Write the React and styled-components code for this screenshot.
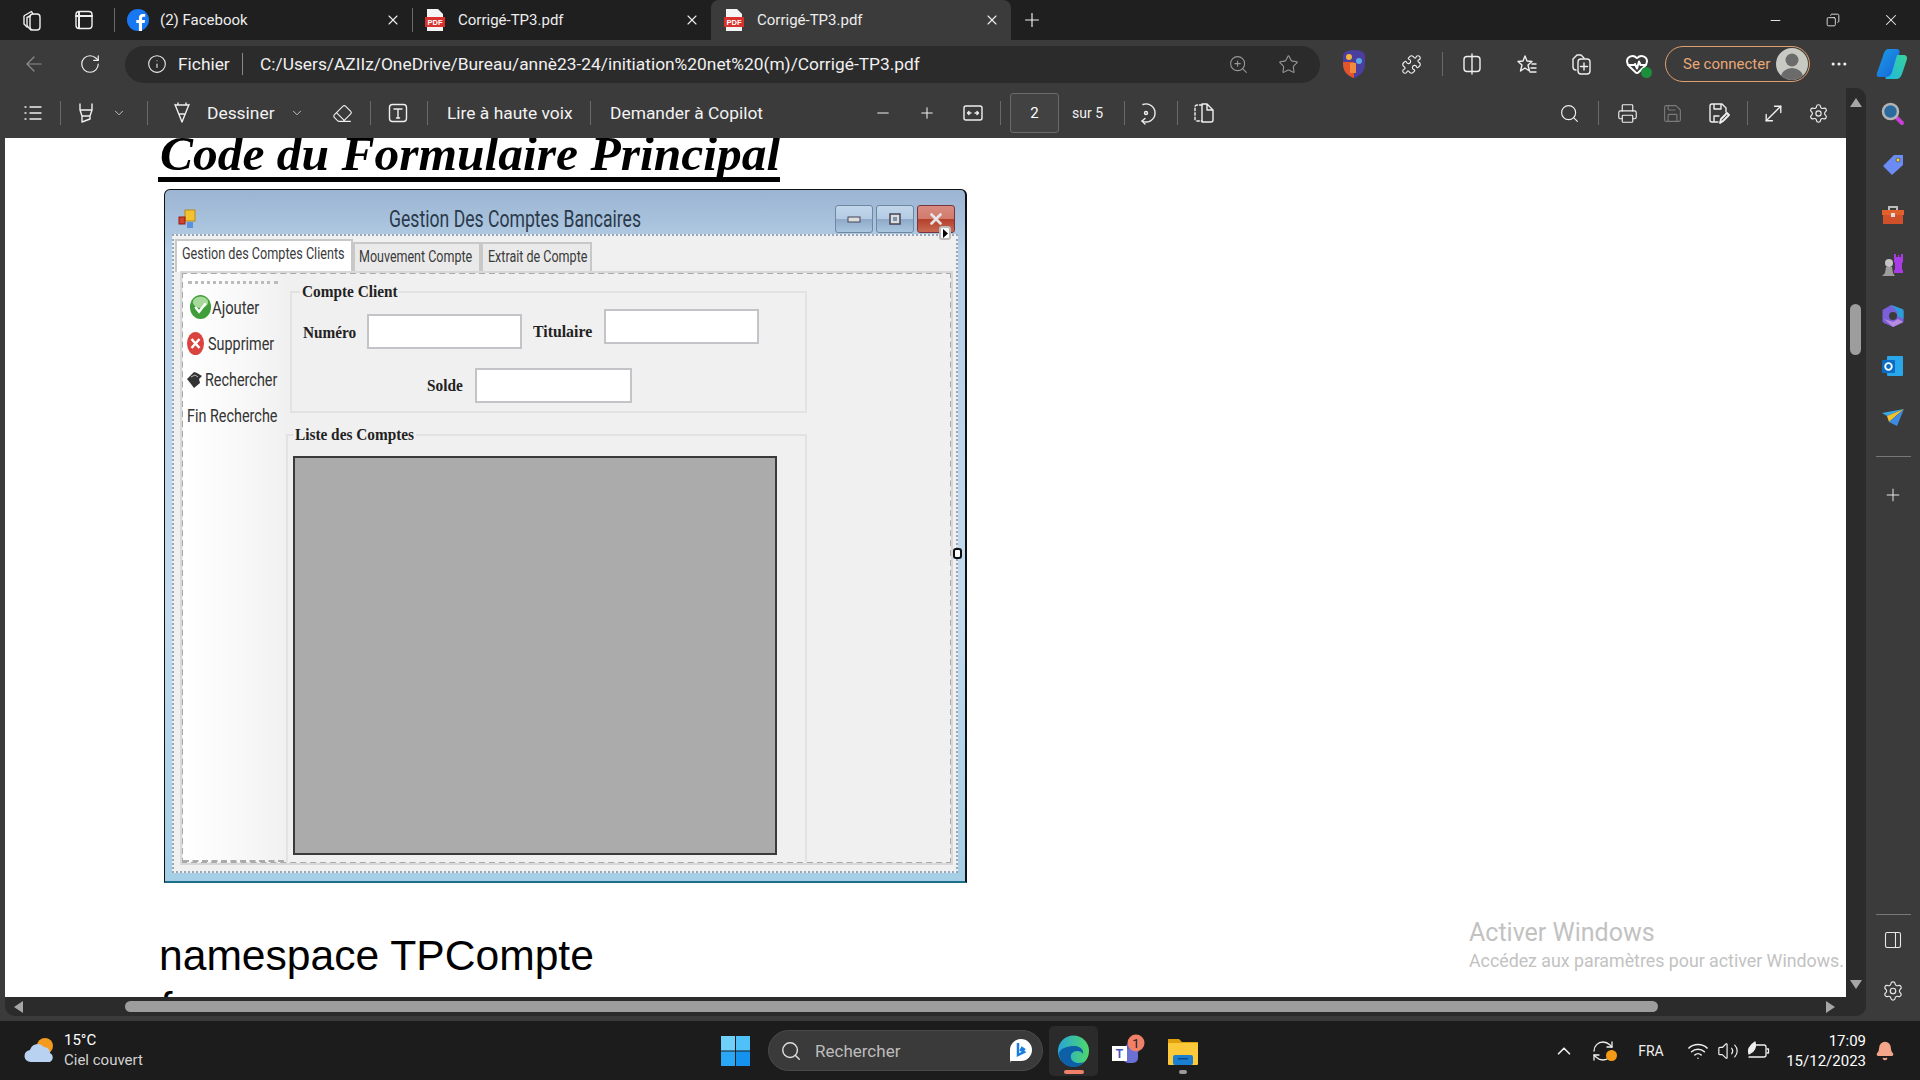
import React from 'react';
import styled, { createGlobalStyle } from 'styled-components';
import {
  ArrowLeft, RotateCw, Info, ZoomIn, Star, Puzzle, Plus, Minus, X, Copy,
  MoreHorizontal, Search, Printer, Save, Settings, ChevronDown, ChevronUp, Eraser,
  Wifi, Volume2, Bell, RefreshCw, PanelRight, MoveDiagonal, HeartPulse,
} from 'lucide-react';

const UI = '"Roboto", "Noto Sans", sans-serif';
const SERIF = '"Liberation Serif", serif';

const GlobalStyle = createGlobalStyle`
  html, body { margin: 0; padding: 0; background: #1c1c1c; }
  * { box-sizing: border-box; }
`;

const Screen = styled.div`
  width: 1920px;
  height: 1080px;
  display: flex;
  flex-direction: column;
  overflow: hidden;
  font-family: ${UI};
  color: #fff;
  background: #3b3b3b;
`;

/* the form in the picture is a stretched capture, so its text runs narrower than any installed face */
const Squeeze = styled.span`
  display: inline-block;
  flex: none;
  width: ${(p) => p.$w}px;
  white-space: nowrap;
  transform: scaleX(${(p) => p.$x});
  transform-origin: left center;
`;

/* tab strip */
const TabStrip = styled.div`
  height: 40px;
  flex: none;
  display: flex;
  align-items: center;
  background: #1f1f1f;
  padding-left: 14px;
`;
const Slot = styled.div`
  width: ${(p) => p.$w}px;
  height: ${(p) => p.$h || 40}px;
  flex: none;
  display: flex;
  align-items: center;
  justify-content: center;
  color: ${(p) => p.$color || '#efefef'};
  font-size: 14px;
  margin-left: ${(p) => p.$ml || 0}px;
`;
const Sep = styled.span`
  display: block;
  width: 1px;
  height: ${(p) => p.$h || 24}px;
  background: ${(p) => p.$color || '#6a6a6a'};
`;
const Tab = styled.div`
  width: ${(p) => p.$w}px;
  height: 40px;
  flex: none;
  display: flex;
  align-items: center;
  gap: ${(p) => p.$gap}px;
  padding: 0 11px 0 ${(p) => p.$pad}px;
  font-size: 15px;
  color: #ededed;
  background: ${(p) => (p.$active ? '#3b3b3b' : 'transparent')};
  border-radius: ${(p) => (p.$active ? '8px 8px 0 0' : '0')};
  span { flex: 1; }
`;
const Grow = styled.div`
  flex: 1;
`;

/* address bar */
const AddressBar = styled.div`
  height: 48px;
  flex: none;
  display: flex;
  align-items: center;
  padding-left: 14px;
`;
const UrlPill = styled.div`
  width: 1195px;
  height: 37px;
  flex: none;
  margin-left: 15px;
  border-radius: 19px;
  background: #2b2b2b;
  display: flex;
  align-items: center;
  padding-left: 22px;
  font-size: 17.35px;
  color: #f0f0f0;
`;
const Fichier = styled.span`
  margin-left: 11px;
  width: 64px;
`;
const UrlText = styled.span`
  margin-left: 17px;
  width: 968px;
  white-space: nowrap;
`;
const SignIn = styled.div`
  width: 145px;
  height: 36px;
  flex: none;
  margin-left: 13px;
  border: 1.5px solid #e0a070;
  border-radius: 18px;
  display: flex;
  align-items: center;
  justify-content: space-between;
  padding: 0 1px 0 17px;
  font-size: 15px;
  color: #e8a878;
`;

/* workspace */
const Workspace = styled.div`
  flex: 1;
  min-height: 0;
  display: flex;
  padding-bottom: 5px;
`;
const Reader = styled.div`
  flex: 1;
  min-width: 0;
  display: flex;
  flex-direction: column;
`;
const ReaderTop = styled.div`
  flex: 1;
  min-height: 0;
  display: flex;
`;
const ReaderMain = styled.div`
  flex: 1;
  min-width: 0;
  display: flex;
  flex-direction: column;
`;
const PdfToolbar = styled.div`
  height: 50px;
  flex: none;
  display: flex;
  align-items: center;
  padding-left: 13px;
  background: #3b3b3b;
`;
const ToolText = styled.div`
  flex: none;
  width: ${(p) => p.$w}px;
  margin-left: ${(p) => p.$ml || 0}px;
  font-size: ${(p) => p.$size || 17.4}px;
  color: #f2f2f2;
  white-space: nowrap;
`;
const PageBox = styled.div`
  width: 49px;
  height: 40px;
  flex: none;
  border: 1px solid #6a6a6a;
  border-radius: 3px;
  background: #424242;
  display: flex;
  align-items: center;
  justify-content: center;
  font-size: 15px;
`;
const DocClip = styled.div`
  flex: 1;
  min-height: 0;
  margin-left: 5px;
  padding-left: 155px;
  background: #fff;
  overflow: hidden;
  position: relative;
  color: #000;
`;
const Heading = styled.h1`
  display: inline-block;
  margin: -7px 0 0 -2px;
  padding-left: 2px;
  font: italic bold 49.5px/46px ${SERIF};
  border-bottom: 5px solid #000;
  white-space: nowrap;
`;
const CodeLine = styled.div`
  font: 42.6px/52px "Liberation Sans", sans-serif;
  white-space: nowrap;
  margin: ${(p) => p.$mt || 0}px 0 0 -1px;
`;
const Watermark = styled.div`
  position: absolute;
  left: 1464px;
  top: 777px;
  color: #c2c2c2;
  font-size: 17.8px;
  white-space: nowrap;
  p { margin: 0; font-size: 25px; line-height: 35px; }
`;

/* scrollbars */
const VScroll = styled.div`
  width: 20px;
  flex: none;
  background: #2b2b2b;
  border-radius: 0 10px 0 0;
  position: relative;
  display: flex;
  flex-direction: column;
  align-items: center;
  justify-content: space-between;
  padding: 10px 0 8px;
`;
const VThumb = styled.div`
  position: absolute;
  top: 216px;
  left: 4px;
  width: 11px;
  height: 51px;
  border-radius: 6px;
  background: #9d9d9d;
`;
const ArrowV = styled.div`
  width: 0;
  height: 0;
  border-left: 6px solid transparent;
  border-right: 6px solid transparent;
  border-${(p) => (p.$down ? 'top' : 'bottom')}: 9px solid #a6a6a6;
`;
const HScroll = styled.div`
  height: 19px;
  flex: none;
  margin-left: 5px;
  background: #2b2b2b;
  border-radius: 0 0 10px 10px;
  display: flex;
  align-items: center;
  padding-left: 9px;
`;
const HThumb = styled.div`
  width: 1533px;
  height: 11px;
  margin-left: 102px;
  border-radius: 6px;
  background: #9d9d9d;
`;
const ArrowH = styled.div`
  width: 0;
  height: 0;
  border-top: 6px solid transparent;
  border-bottom: 6px solid transparent;
  border-${(p) => (p.$right ? 'left' : 'right')}: 9px solid #a6a6a6;
  margin-left: ${(p) => p.$ml || 0}px;
`;

/* side panel */
const SidePanel = styled.div`
  width: 54px;
  flex: none;
  display: flex;
  flex-direction: column;
  align-items: center;
  padding-top: 1px;
`;
const SideSlot = styled.div`
  height: 50.4px;
  width: 54px;
  flex: none;
  display: flex;
  align-items: center;
  justify-content: center;
  color: #e8e8e8;
`;
const SideRule = styled.div`
  width: 35px;
  height: 1px;
  background: #777;
  margin: ${(p) => p.$m};
`;

/* taskbar */
const Taskbar = styled.div`
  height: 59px;
  flex: none;
  display: flex;
  align-items: center;
  background: #1c1c1c;
`;
const Weather = styled.div`
  width: 721px;
  flex: none;
  display: flex;
  align-items: center;
  gap: 9px;
  padding-left: 24px;
  font-size: 15px;
  line-height: 20px;
  margin-top: -1px;
  div:last-child { color: #d2d2d2; }
  b { display: block; font-weight: 400; color: #fff; }
`;
const TaskSearch = styled.div`
  width: 275px;
  height: 41px;
  flex: none;
  margin-left: 18px;
  border-radius: 21px;
  border: 1px solid #4a4a4a;
  background: #3a3a3a;
  display: flex;
  align-items: center;
  padding: 0 9px 0 11px;
  gap: 13px;
  color: #bdbdbd;
  font-size: 17px;
  span { flex: 1; }
`;
const TaskApp = styled.div`
  width: ${(p) => p.$w}px;
  height: 50px;
  flex: none;
  margin-left: ${(p) => p.$ml}px;
  display: flex;
  align-items: center;
  justify-content: center;
  position: relative;
  border-radius: 5px;
  background: ${(p) => (p.$on ? '#2b2b2b' : 'transparent')};
`;
const RunMark = styled.span`
  position: absolute;
  bottom: 2px;
  left: 50%;
  transform: translateX(-50%);
  width: ${(p) => p.$w}px;
  height: 4px;
  border-radius: 2px;
  background: ${(p) => p.$color};
`;
const Clock = styled.div`
  width: 90px;
  flex: none;
  text-align: right;
  font-size: 15px;
  line-height: 20px;
  margin-left: 5px;
`;

/* the captured WinForms window */
const WinFrame = styled.div`
  width: 803px;
  height: 694px;
  margin: 7px 0 0 4px;
  position: relative;
  display: flex;
  flex-direction: column;
  border: 1px solid #111;
  border-right-width: 2px;
  border-bottom: 2px solid #1e6f86;
  border-radius: 6px 6px 0 0;
  background: linear-gradient(#9ab4d2, #b6d0e8 9%, #c5dcef 60%, #a5cfe6);
  padding: 0 7px 8px 7px;
  font-family: ${UI};
  color: #222;
`;
const WinTitle = styled.div`
  height: 44px;
  flex: none;
  display: flex;
  align-items: center;
  padding: 14px 3px 0 6px;
`;
const WinCaption = styled(Squeeze)`
  margin-left: 193px;
  font-size: 23px;
  color: #2b3a4a;
`;
const WinBtn = styled.div`
  width: 38px;
  height: 28px;
  margin-left: 3px;
  flex: none;
  display: flex;
  align-items: center;
  justify-content: center;
  border: 1px solid ${(p) => (p.$close ? '#7a3440' : '#6f87a3')};
  border-radius: 3px;
  background: ${(p) => (p.$close
    ? 'linear-gradient(#d98b80, #d07a6c 50%, #b4402c 52%, #c96a52)'
    : 'linear-gradient(#c2d6ea, #b3cbe3 50%, #8faac8 52%, #a9c6df)')};
`;
const WinBody = styled.div`
  flex: 1;
  min-height: 0;
  display: flex;
  flex-direction: column;
  background: #f0f0f0;
  border: 2px dotted #97a6b8;
  padding: 1px 4px 7px 1px;
`;
const TabRow = styled.div`
  height: 35px;
  flex: none;
  display: flex;
  align-items: flex-end;
`;
const FormTab = styled.div`
  width: ${(p) => p.$w}px;
  height: ${(p) => (p.$active ? 33 : 30)}px;
  flex: none;
  display: flex;
  align-items: center;
  padding: 0 0 ${(p) => (p.$active ? 8 : 4)}px ${(p) => p.$pl}px;
  font-size: 17px;
  color: #3a3a3a;
  background: ${(p) => (p.$active ? '#fff' : '#eaeaea')};
  border: 2px solid #c8c8c8;
  border-bottom: 0;
`;
const TabPage = styled.div`
  flex: 1;
  min-height: 0;
  display: flex;
  margin-left: 6px;
  border: 2px dashed #a9a9a9;
  outline: 2px solid #d8d8d8;
  outline-offset: -1px;
`;
const ToolStrip = styled.div`
  width: 101px;
  flex: none;
  display: flex;
  flex-direction: column;
  background: linear-gradient(90deg, #fff, #f8f8f8 60%, #f1f1f1);
  border-bottom: 2px dashed #aaa;
  padding: 7px 0 0 3px;
`;
const Grip = styled.div`
  width: 90px;
  height: 3px;
  margin: 0 0 5px 2px;
  border-top: 3px dotted #bbb;
`;
const StripItem = styled.div`
  height: 36.2px;
  flex: none;
  display: flex;
  align-items: center;
  gap: ${(p) => p.$gap}px;
  padding-left: ${(p) => p.$pad}px;
  font-size: 18px;
  color: #333;
  svg { flex: none; }
`;
const FormContent = styled.div`
  width: 523px;
  flex: none;
  display: flex;
  flex-direction: column;
`;
const GroupBox = styled.fieldset`
  flex: ${(p) => (p.$h ? 'none' : 1)};
  margin: ${(p) => p.$m};
  padding: ${(p) => p.$p};
  min-width: 0;
  border: 2px solid #e2e2e2;
  border-bottom-width: ${(p) => (p.$open ? 0 : 2)}px;
  ${(p) => (p.$h ? `height: ${p.$h}px;` : '')}
  legend {
    padding: 0 2px;
    margin-left: ${(p) => p.$lm}px;
    font: bold 17px/18px ${SERIF};
    color: #222;
  }
`;
const FieldRow = styled.div`
  display: flex;
  align-items: flex-start;
  padding-left: ${(p) => p.$pl}px;
  margin-top: ${(p) => p.$mt || 0}px;
`;
const FieldLabel = styled(Squeeze)`
  margin: ${(p) => p.$m || 0};
  font: bold 17px/20px ${SERIF};
  color: #222;
`;
const TextBox = styled.div`
  height: 35px;
  width: ${(p) => p.$w}px;
  flex: none;
  margin: ${(p) => p.$m || 0};
  background: #fff;
  border: 2px solid #c3c3c8;
`;
const GridView = styled.div`
  width: 484px;
  height: 399px;
  margin-left: 5px;
  background: #ababab;
  border: 2px solid #3a3a3a;
`;
const GripTip = styled.div`
  position: absolute;
  width: ${(p) => p.$w}px;
  height: ${(p) => p.$h}px;
  right: ${(p) => p.$r}px;
  top: ${(p) => p.$t}px;
  background: #fff;
  border: 2px solid ${(p) => p.$color};
  border-radius: 3px;
  display: flex;
  align-items: center;
  justify-content: center;
  z-index: 2;
`;

/* drawings */
const Tool = ({ children, ...rest }) => (
  <svg width="24" height="24" viewBox="0 0 24 24" fill="none" stroke="currentColor" strokeWidth="1.4" strokeLinecap="round" strokeLinejoin="round" {...rest}>{children}</svg>
);
const WorkspacesIcon = () => <Tool><rect x="10" y="6" width="10" height="16" rx="3" /><path d="M10 8 7 9.5V17c0 1 .5 1.5 1.500 2.500L11 22" /><path d="M13 6l-1.500-2.500-7 4A2 2 0 0 0 4 9.500V16l3 3" /></Tool>;
const TabsIcon = () => <Tool><rect x="4" y="3.5" width="16" height="17" rx="3" /><path d="M7 4v16M4 8h16" strokeWidth="2" /></Tool>;
const ListIcon = () => <Tool><path d="M4 6h1M9 6h11M4 12h1M9 12h11M4 18h1M9 18h11" /></Tool>;
const MarkerIcon = () => <Tool><path d="M6 3v6h12V3M6 9l2 6h8l2-6M8 15v6l8-3v-3" /></Tool>;
const PenIcon = () => <Tool><path d="M5 3.5 12 21l7-17.5M5 4h14M8 4V2M16 4V2M9 13h6" /></Tool>;
const TextBoxIcon = () => <Tool><rect x="3.5" y="3.5" width="17" height="17" rx="3" /><path d="M8 8h8M12 8v9M10.5 17h3" /></Tool>;
const FitIcon = () => <Tool><rect x="3" y="5" width="18" height="14" rx="2" /><path d="M7 12h3M14 12h3M8 10.5 6.5 12 8 13.5M16 10.5l1.5 1.5-1.5 1.5" /></Tool>;
const RotateIcon = () => <Tool><path d="M9 3.500A9 9 0 1 1 8 20" /><path d="M11 17.500 8 20l3 3" /><circle cx="12" cy="12" r="1.5" /></Tool>;
const TwoPageIcon = () => <Tool><path d="M10 4H5a2 2 0 0 0-2 2v12a2 2 0 0 0 2 2h5" strokeDasharray="2.5 2" /><path d="M10 3v18h9a2 2 0 0 0 2-2V9l-6-6zM15 3v6h6" /></Tool>;
const SaveAsIcon = () => <Tool><path d="M12 21H6a2 2 0 0 1-2-2V5a2 2 0 0 1 2-2h10l4 4v4M8 3v5h7V3M8 21v-6h5" /><path d="M14 22l1-4 6-6 2 2-6 6z" strokeWidth="1.8" /></Tool>;
const FavIcon = () => <Tool><path d="M10 4l2 5 5 .5-4 3.5 1.5 6L10 16l-4.5 3L7 13 3 9.5 8 9z" /><path d="M17 12h4M16 16h5M15 20h6" /></Tool>;
const CollectIcon = () => <Tool><path d="M6 18a3 3 0 0 1-3-3V7l4-4h4l3 3" /><rect x="8" y="7" width="12" height="15" rx="3" /><path d="M14 11v7M10.5 14.5h7" /></Tool>;
const SplitIcon = () => <Tool><rect x="4" y="4.5" width="16" height="15" rx="3" /><path d="M12 2v20" /></Tool>;

const FacebookLogo = () => (
  <svg width="22" height="22" viewBox="0 0 22 22"><circle cx="11" cy="11" r="11" fill="#1877f2" /><path d="M15 22v-8h2.6l.5-3H15V9.300c0-1 .4-1.600 1.700-1.600h1.500V5.100c-.7-.1-1.500-.2-2.300-.2-2.500 0-4 1.500-4 4V11H9.300v3h2.600v8z" fill="#fff" /></svg>
);
const PdfLogo = () => (
  <svg width="20" height="24" viewBox="0 0 20 24"><path d="M2 1h11l5 5v17H2z" fill="#f5f5f5" /><rect x="0" y="9" width="20" height="10" fill="#d9322e" /><text x="10" y="17" textAnchor="middle" fontFamily="Liberation Sans" fontWeight="700" fontSize="7.5" fill="#fff">PDF</text></svg>
);
const ProfileShield = () => (
  <svg width="26" height="30" viewBox="0 0 26 30"><path d="M2 7c0-3 3-6 11-6s11 3 11 6v8c0 8-5 12-11 14C7 27 2 23 2 15z" fill="#4a3f9e" /><path d="M2 13h11v16C7 27 2 23 2 15z" fill="#e2542a" /><circle cx="8" cy="8" r="3" fill="#f3b33d" /><circle cx="18" cy="12" r="3" fill="#5aa7e8" /><rect x="9" y="14" width="6" height="10" fill="#f08a3c" /></svg>
);
const HealthIcon = () => (
  <div style={{ position: 'relative', width: 24, height: 24 }}>
    <HeartPulse size={24} strokeWidth={2} color="#fff" />
    <svg width="11" height="11" viewBox="0 0 11 11" style={{ position: 'absolute', right: -3, bottom: -2 }}><circle cx="5.5" cy="5.5" r="5.5" fill="#1c8f3c" /></svg>
  </div>
);
const Avatar = () => (
  <svg width="32" height="32" viewBox="0 0 32 32"><defs><clipPath id="av"><circle cx="16" cy="16" r="16" /></clipPath></defs><circle cx="16" cy="16" r="16" fill="#c9c9c4" /><g clipPath="url(#av)"><circle cx="16" cy="12" r="6.5" fill="#6b6b6b" /><ellipse cx="16" cy="29" rx="11" ry="9" fill="#6b6b6b" /></g></svg>
);
const CopilotLogo = () => (
  <svg width="34" height="34" viewBox="0 0 34 34"><defs><linearGradient id="cp1" x1="0" y1="0" x2="1" y2="1"><stop offset="0" stopColor="#1a9fe8" /><stop offset="1" stopColor="#1760d8" /></linearGradient><linearGradient id="cp2" x1="0" y1="1" x2="1" y2="0"><stop offset="0" stopColor="#1fb6e0" /><stop offset="1" stopColor="#38d39a" /></linearGradient></defs><path d="M13 2h9c2 0 3 2 2.500 4L19 25c-1 3-3 5-6 5H4c-2 0-3-2-2-4l6-17c1-4 3-7 5-7z" fill="url(#cp1)" /><path d="M22 8h7c2 0 3.500 2 3 4l-5 15c-1 3-3 5-6 5h-9c-2 0-2-1-1-2 3 0 5-2 6-5z" fill="url(#cp2)" /></svg>
);
const FormIcon = () => (
  <svg width="18" height="20" viewBox="0 0 18 20"><rect x="7" y="1" width="10" height="11" fill="#f2c230" stroke="#b88a1a" /><rect x="1" y="8" width="6" height="7" fill="#d8402e" stroke="#8a1f14" /><rect x="9" y="13" width="6" height="6" fill="#5d8fe0" /></svg>
);
const OkIcon = () => (
  <svg width="23" height="26" viewBox="0 0 24 26"><ellipse cx="12" cy="13" rx="11" ry="12.5" fill="#3f9e3a" /><ellipse cx="12" cy="8" rx="8" ry="6" fill="#a6d99a" /><path d="M6.5 13l4 5 7-9" stroke="#fff" strokeWidth="2.5" fill="none" /></svg>
);
const DeleteIcon = () => (
  <svg width="17" height="23" viewBox="0 0 17 23"><ellipse cx="8.5" cy="11.5" rx="8.5" ry="11.5" fill="#d9453e" /><path d="M4.5 7l8 9M12.5 7l-8 9" stroke="#fff" strokeWidth="2.5" /></svg>
);
const SearchFormIcon = () => (
  <svg width="17" height="19" viewBox="0 0 17 19"><path d="M1 9l7-7 3 1 5 3-3 3 1 4-6 5-3-4z" fill="#333" /><path d="M5 7l4-2 3 2" stroke="#bbb" fill="none" /></svg>
);

const SideLens = () => (
  <svg width="24" height="24" viewBox="0 0 24 24"><path d="M14 14l7 7" stroke="#c93fd8" strokeWidth="4" strokeLinecap="round" /><circle cx="9.5" cy="9.5" r="7.5" fill="#2a6a9e" stroke="#b4b4b4" strokeWidth="2.5" /></svg>
);
const SideTag = () => (
  <svg width="22" height="22" viewBox="0 0 22 22"><path d="M1 12 12 1h9v10L10 21z" fill="#6b8cf5" /><circle cx="16" cy="6" r="2" fill="#f1d03a" stroke="#333" strokeWidth=".6" /></svg>
);
const SideBox = () => (
  <svg width="24" height="20" viewBox="0 0 24 20"><path d="M8 5V2h8v3" stroke="#bdbdbd" strokeWidth="2" fill="none" /><rect x="1" y="5" width="22" height="5" fill="#e2602c" /><rect x="2" y="10" width="20" height="9" fill="#d0502a" /><rect x="10" y="8" width="4" height="4" fill="#ddd" /></svg>
);
const SideChess = () => (
  <svg width="24" height="24" viewBox="0 0 24 24"><path d="M15 1v3h2V2h1v2h2V1h2v8l-1 1v7h1v3H13v-3h1v-7l-1-1V1z" fill="#a93ce6" /><circle cx="8" cy="10" r="4" fill="#c4c4c4" /><path d="M5 14h6l1 6 2 3H1l3-3z" fill="#9c9c9c" /></svg>
);
const SideM365 = () => (
  <svg width="22" height="24" viewBox="0 0 22 24"><path d="M9 1 20 5c1 .5 1.5 1 1.5 2v10c0 1-.5 1.5-1.500 2L11 23 2 19c-1-.5-1.500-1-1.500-2V6z" fill="#7a5fd8" /><path d="M9 1l11 4c1 .5 1.500 1 1.500 2v8l-6-3V8z" fill="#27a0d8" /><path d="M2 15l9 8 10-5-5-3-5 3z" fill="#b98be0" /><circle cx="11" cy="12" r="4" fill="#3b3b3b" /></svg>
);
const SideOutlook = () => (
  <svg width="22" height="22" viewBox="0 0 22 22"><rect x="5" y="1" width="16" height="20" rx="1" fill="#28a8ea" /><rect x="0" y="5" width="13" height="13" rx="1" fill="#0a6cc4" /><circle cx="6.5" cy="11.5" r="3.3" fill="none" stroke="#fff" strokeWidth="1.8" /></svg>
);
const SideSend = () => (
  <svg width="24" height="18" viewBox="0 0 24 18"><path d="M1 5 23 1 6 8z" fill="#38a8e8" /><path d="M6 8 23 1 8 14z" fill="#f2c12e" /><path d="M23 1 16 18l-8-4z" fill="#3d8be0" /></svg>
);

const CloudIcon = () => (
  <svg width="31" height="27" viewBox="0 0 31 27"><circle cx="21" cy="9" r="8" fill="#f39a1f" /><path d="M7 25a6 6 0 0 1-1-12 8 8 0 0 1 14-3 6 6 0 0 1 6 6 5 5 0 0 1 0 9z" fill="#b9d2f2" /></svg>
);
const WinLogo = () => (
  <svg width="29" height="30" viewBox="0 0 29 30"><rect width="14" height="14.5" fill="#6fd0fa" /><rect x="15" width="14" height="14.5" fill="#4fc0f8" /><rect y="15.5" width="14" height="14.5" fill="#2aa8f5" /><rect x="15" y="15.5" width="14" height="14.5" fill="#1492ee" /></svg>
);
const BingLogo = () => (
  <svg width="24" height="26" viewBox="0 0 24 26"><path d="M12 1a11 11 0 0 1 0 22H2v2l-1-3V12A11 11 0 0 1 12 1z" fill="#fff" /><path d="M9 5v12l6-3-3-2 1-2 3 2" stroke="#1a7fdc" strokeWidth="2.5" fill="none" /></svg>
);
const EdgeLogo = () => (
  <svg width="31" height="32" viewBox="0 0 31 32"><defs><linearGradient id="ed" x1="0" y1="0" x2="1" y2="0"><stop offset="0" stopColor="#27a5d8" /><stop offset="1" stopColor="#4fd86a" /></linearGradient></defs><circle cx="15.5" cy="16" r="15.5" fill="url(#ed)" /><path d="M1 18c0 8 7 14 14 14 5 0 9-2 11-5-5 2-12 1-13-4-1-4 2-7 6-7 3 0 5 1 6 3 1-4-3-8-8-8C9 11 3 13 1 18z" fill="#0d5fa8" /></svg>
);
const TeamsLogo = () => (
  <svg width="34" height="34" viewBox="0 0 34 34"><circle cx="21" cy="15" r="7" fill="#5b5fc7" /><rect x="12" y="15" width="15" height="14" rx="5" fill="#6a6fd4" /><rect x="1" y="12" width="15" height="15" fill="#fff" /><text x="8.5" y="24" textAnchor="middle" fontFamily="Liberation Sans" fontWeight="700" fontSize="12" fill="#4b53bc">T</text><circle cx="25" cy="9" r="8.5" fill="#f08068" /><text x="25" y="13.5" textAnchor="middle" fontFamily="Roboto" fontSize="13" fill="#222">1</text></svg>
);
const FolderLogo = () => (
  <svg width="32" height="32" viewBox="0 0 32 32"><path d="M1 4h11l3 3h16v4H1z" fill="#e0a20c" /><rect x="1" y="8" width="30" height="22" rx="1" fill="#fcc93a" /><rect x="6" y="20" width="20" height="10" rx="2" fill="#1a7fd0" /><rect x="11" y="23" width="10" height="1.5" fill="#0a4a8a" /></svg>
);
const SyncDot = () => (
  <div style={{ position: 'relative', width: 24, height: 24 }}>
    <RefreshCw size={24} strokeWidth={1.3} color="#f0f0f0" />
    <svg width="11" height="11" viewBox="0 0 11 11" style={{ position: 'absolute', right: -2, bottom: 2 }}><circle cx="5.5" cy="5.5" r="5.5" fill="#f59a14" /></svg>
  </div>
);
const BatteryIcon = () => (
  <Tool strokeWidth="1.3"><path d="M9 6h9a2 2 0 0 1 2 2v8a2 2 0 0 1-2 2H3" /><path d="M21 10h1.5v4H21" /><path d="M3 15C1 9 6 5 9 3c1 4 1 9-6 12z" fill="currentColor" /></Tool>
);

const icon = { size: 21, strokeWidth: 1.3 };

const PdfTab = ({ w, pad, gap, active, label, logo }) => (
  <Tab $w={w} $pad={pad} $gap={gap} $active={active}>
    {logo}
    <span>{label}</span>
    <X size={16} strokeWidth={1.7} />
  </Tab>
);

const App = () => (
  <Screen>
    <GlobalStyle />
    <TabStrip>
      <Slot $w={36}><WorkspacesIcon /></Slot>
      <Slot $w={36} $ml={16}><TabsIcon /></Slot>
      <Slot $w={24}><Sep /></Slot>
      <PdfTab w={286} pad={1} gap={11} label="(2) Facebook" logo={<FacebookLogo />} />
      <Sep />
      <PdfTab w={298} pad={12} gap={13} label="Corrigé-TP3.pdf" logo={<PdfLogo />} />
      <PdfTab w={300} pad={13} gap={13} active label="Corrigé-TP3.pdf" logo={<PdfLogo />} />
      <Slot $w={42}><Plus size={22} strokeWidth={1.3} /></Slot>
      <Grow />
      <Slot $w={58}><Minus size={15} strokeWidth={1.5} /></Slot>
      <Slot $w={58}><Copy size={14} strokeWidth={1.5} style={{ transform: 'scaleX(-1)' }} /></Slot>
      <Slot $w={58}><X size={18} strokeWidth={1.4} /></Slot>
    </TabStrip>

    <AddressBar>
      <Slot $w={40} $h={48} $color="#8d8d8d"><ArrowLeft size={24} strokeWidth={1.2} /></Slot>
      <Slot $w={40} $h={48} $ml={16}><RotateCw size={22} strokeWidth={1.3} /></Slot>
      <UrlPill>
        <Info size={20} strokeWidth={1.3} />
        <Fichier>Fichier</Fichier>
        <Sep $color="#888" $h={22} />
        <UrlText>C:/Users/AZIIz/OneDrive/Bureau/annè23-24/initiation%20net%20(m)/Corrigé-TP3.pdf</UrlText>
        <ZoomIn size={21} strokeWidth={1.2} color="#999" />
        <Slot $w={21} $h={37} $ml={29} $color="#999"><Star size={21} strokeWidth={1.2} /></Slot>
      </UrlPill>
      <Slot $w={34} $h={48} $ml={17}><ProfileShield /></Slot>
      <Slot $w={30} $h={48} $ml={25}><Puzzle {...icon} /></Slot>
      <Slot $w={1} $h={48} $ml={16}><Sep /></Slot>
      <Slot $w={30} $h={48} $ml={14}><SplitIcon /></Slot>
      <Slot $w={30} $h={48} $ml={25}><FavIcon /></Slot>
      <Slot $w={30} $h={48} $ml={25}><CollectIcon /></Slot>
      <Slot $w={30} $h={48} $ml={25}><HealthIcon /></Slot>
      <SignIn>Se connecter<Avatar /></SignIn>
      <Slot $w={30} $h={48} $ml={14}><MoreHorizontal size={20} strokeWidth={1.8} /></Slot>
      <Slot $w={40} $h={48} $ml={18}><CopilotLogo /></Slot>
    </AddressBar>

    <Workspace>
      <Reader>
        <ReaderTop>
          <ReaderMain>
            <PdfToolbar>
              <Slot $w={40} $h={50}><ListIcon /></Slot>
              <Slot $w={14} $h={50}><Sep /></Slot>
              <Slot $w={38} $h={50}><MarkerIcon /></Slot>
              <Slot $w={28} $h={50}><ChevronDown size={14} strokeWidth={1.3} /></Slot>
              <Slot $w={28} $h={50}><Sep /></Slot>
              <Slot $w={42} $h={50}><PenIcon /></Slot>
              <ToolText $w={76} $ml={4}>Dessiner</ToolText>
              <Slot $w={28} $h={50}><ChevronDown size={14} strokeWidth={1.3} /></Slot>
              <Slot $w={38} $h={50} $ml={12}><Eraser {...icon} /></Slot>
              <Slot $w={18} $h={50}><Sep /></Slot>
              <Slot $w={38} $h={50}><TextBoxIcon /></Slot>
              <Slot $w={20} $h={50}><Sep /></Slot>
              <ToolText $w={126} $ml={10}>Lire à haute voix</ToolText>
              <Slot $w={34} $h={50}><Sep /></Slot>
              <ToolText $w={156} $ml={3}>Demander à Copilot</ToolText>
              <Slot $w={30} $h={50} $ml={102}><Minus size={18} strokeWidth={1.4} /></Slot>
              <Slot $w={30} $h={50} $ml={14}><Plus size={18} strokeWidth={1.4} /></Slot>
              <Slot $w={30} $h={50} $ml={16}><FitIcon /></Slot>
              <Slot $w={1} $h={50} $ml={12}><Sep /></Slot>
              <Slot $w={1} $h={50} $ml={8} />
              <PageBox>2</PageBox>
              <ToolText $w={34} $ml={13} $size={14}>sur 5</ToolText>
              <Slot $w={1} $h={50} $ml={18}><Sep /></Slot>
              <Slot $w={30} $h={50} $ml={6}><RotateIcon /></Slot>
              <Slot $w={1} $h={50} $ml={16}><Sep /></Slot>
              <Slot $w={30} $h={50} $ml={11}><TwoPageIcon /></Slot>
              <Grow />
              <Slot $w={30} $h={50}><Search {...icon} /></Slot>
              <Slot $w={1} $h={50} $ml={14}><Sep /></Slot>
              <Slot $w={30} $h={50} $ml={13}><Printer {...icon} /></Slot>
              <Slot $w={30} $h={50} $ml={15} $color="#7a7a7a"><Save {...icon} /></Slot>
              <Slot $w={30} $h={50} $ml={16}><SaveAsIcon /></Slot>
              <Slot $w={1} $h={50} $ml={14}><Sep /></Slot>
              <Slot $w={30} $h={50} $ml={10}><MoveDiagonal size={25} strokeWidth={1.3} /></Slot>
              <Slot $w={30} $h={50} $ml={15}><Settings {...icon} /></Slot>
              <Slot $w={13} $h={50} />
            </PdfToolbar>
            <DocClip>
              <Heading>Code du Formulaire Principal</Heading>
              <WinFrame>
                <WinTitle>
                  <FormIcon />
                  <WinCaption $w={252} $x={0.766}>Gestion Des Comptes Bancaires</WinCaption>
                  <Grow />
                  <WinBtn><svg width="14" height="8"><rect x="1" y="2" width="12" height="5" fill="#ddd" stroke="#445" /></svg></WinBtn>
                  <WinBtn><svg width="14" height="14"><rect x="2" y="2" width="10" height="10" fill="#ddd" stroke="#445" strokeWidth="1.5" /><rect x="5" y="5" width="4" height="4" fill="#7d93ad" /></svg></WinBtn>
                  <WinBtn $close><X size={18} strokeWidth={3.6} color="#e4e4e4" /></WinBtn>
                </WinTitle>
                <GripTip $w={12} $h={14} $r={14} $t={36} $color="#bbb"><svg width="5" height="9"><path d="M0 0l5 4.500L0 9z" fill="#000" /></svg></GripTip>
                <GripTip $w={9} $h={11} $r={3} $t={358} $color="#111" />
                <WinBody>
                  <TabRow>
                    <FormTab $w={178} $pl={5} $active><Squeeze $w={162} $x={0.743}>Gestion des Comptes Clients</Squeeze></FormTab>
                    <FormTab $w={128} $pl={4}><Squeeze $w={114} $x={0.735}>Mouvement Compte</Squeeze></FormTab>
                    <FormTab $w={111} $pl={5}><Squeeze $w={99} $x={0.737}>Extrait de Compte</Squeeze></FormTab>
                  </TabRow>
                  <TabPage>
                    <ToolStrip>
                      <Grip />
                      <StripItem $pad={3} $gap={0}><OkIcon /><Squeeze $w={48} $x={0.82}>Ajouter</Squeeze></StripItem>
                      <StripItem $pad={1} $gap={4}><DeleteIcon /><Squeeze $w={68} $x={0.8}>Supprimer</Squeeze></StripItem>
                      <StripItem $pad={0} $gap={2}><SearchFormIcon /><Squeeze $w={71} $x={0.8}>Rechercher</Squeeze></StripItem>
                      <StripItem $pad={1} $gap={0}><Squeeze $w={90} $x={0.8}>Fin Recherche</Squeeze></StripItem>
                    </ToolStrip>
                    <FormContent>
                      <GroupBox $m="9px 0 0 6px" $p="13px 0 0 11px" $h={130} $lm={-3}>
                        <legend><Squeeze $w={94} $x={0.9}>Compte Client</Squeeze></legend>
                        <FieldRow $pl={0}>
                          <FieldLabel as="div" $w={64} $x={0.9} $m="9px 0 0 0">Numéro</FieldLabel>
                          <TextBox $w={155} />
                          <FieldLabel as="div" $w={71} $x={0.93} $m="8px 0 0 11px">Titulaire</FieldLabel>
                          <TextBox $w={155} $m="-5px 0 0 0" />
                        </FieldRow>
                        <FieldRow $pl={124} $mt={19}>
                          <FieldLabel as="div" $w={48} $x={0.9} $m="8px 0 0 0">Solde</FieldLabel>
                          <TextBox $w={157} />
                        </FieldRow>
                      </GroupBox>
                      <GroupBox $m="13px 0 0 2px" $p="12px 0 0 0" $lm={5} $open>
                        <legend><Squeeze $w={119} $x={0.9}>Liste des Comptes</Squeeze></legend>
                        <GridView />
                      </GroupBox>
                    </FormContent>
                  </TabPage>
                </WinBody>
              </WinFrame>
              <CodeLine $mt={46}>namespace TPCompte</CodeLine>
              <CodeLine>{'{'}</CodeLine>
              <Watermark>
                <p>Activer Windows</p>
                Accédez aux paramètres pour activer Windows.
              </Watermark>
            </DocClip>
          </ReaderMain>
          <VScroll>
            <ArrowV />
            <VThumb />
            <ArrowV $down />
          </VScroll>
        </ReaderTop>
        <HScroll>
          <ArrowH />
          <HThumb />
          <ArrowH $right $ml={168} />
        </HScroll>
      </Reader>
      <SidePanel>
        <SideSlot><SideLens /></SideSlot>
        <SideSlot><SideTag /></SideSlot>
        <SideSlot><SideBox /></SideSlot>
        <SideSlot><SideChess /></SideSlot>
        <SideSlot><SideM365 /></SideSlot>
        <SideSlot><SideOutlook /></SideSlot>
        <SideSlot><SideSend /></SideSlot>
        <SideRule $m="14px 0 13px" />
        <SideSlot><Plus size={20} strokeWidth={1.2} /></SideSlot>
        <Grow />
        <SideRule $m="0" />
        <SideSlot><PanelRight size={20} strokeWidth={1.3} /></SideSlot>
        <SideSlot><Settings size={22} strokeWidth={1.3} /></SideSlot>
      </SidePanel>
    </Workspace>

    <Taskbar>
      <Weather>
        <CloudIcon />
        <div><b>15°C</b>Ciel couvert</div>
      </Weather>
      <WinLogo />
      <TaskSearch>
        <Search size={22} strokeWidth={1.6} color="#ddd" />
        <span>Rechercher</span>
        <BingLogo />
      </TaskSearch>
      <TaskApp $w={49} $ml={6} $on><EdgeLogo /><RunMark $w={20} $color="#f08068" /></TaskApp>
      <TaskApp $w={44} $ml={8}><TeamsLogo /></TaskApp>
      <TaskApp $w={44} $ml={11}><FolderLogo /><RunMark $w={8} $color="#9a9a9a" /></TaskApp>
      <Grow />
      <Slot $w={30} $h={50}><ChevronUp size={22} strokeWidth={1.8} /></Slot>
      <Slot $w={30} $h={50} $ml={9}><SyncDot /></Slot>
      <Slot $w={40} $h={50} $ml={13}>FRA</Slot>
      <Slot $w={26} $h={50} $ml={14}><Wifi size={22} strokeWidth={1.6} /></Slot>
      <Slot $w={26} $h={50} $ml={4}><Volume2 size={22} strokeWidth={1.3} /></Slot>
      <Slot $w={26} $h={50} $ml={4}><BatteryIcon /></Slot>
      <Clock>17:09<br />15/12/2023</Clock>
      <Slot $w={24} $h={50} $ml={7} $color="#f4a58a"><Bell size={20} fill="#f4a58a" /></Slot>
      <Slot $w={23} $h={50} />
    </Taskbar>
  </Screen>
);

export default App;
